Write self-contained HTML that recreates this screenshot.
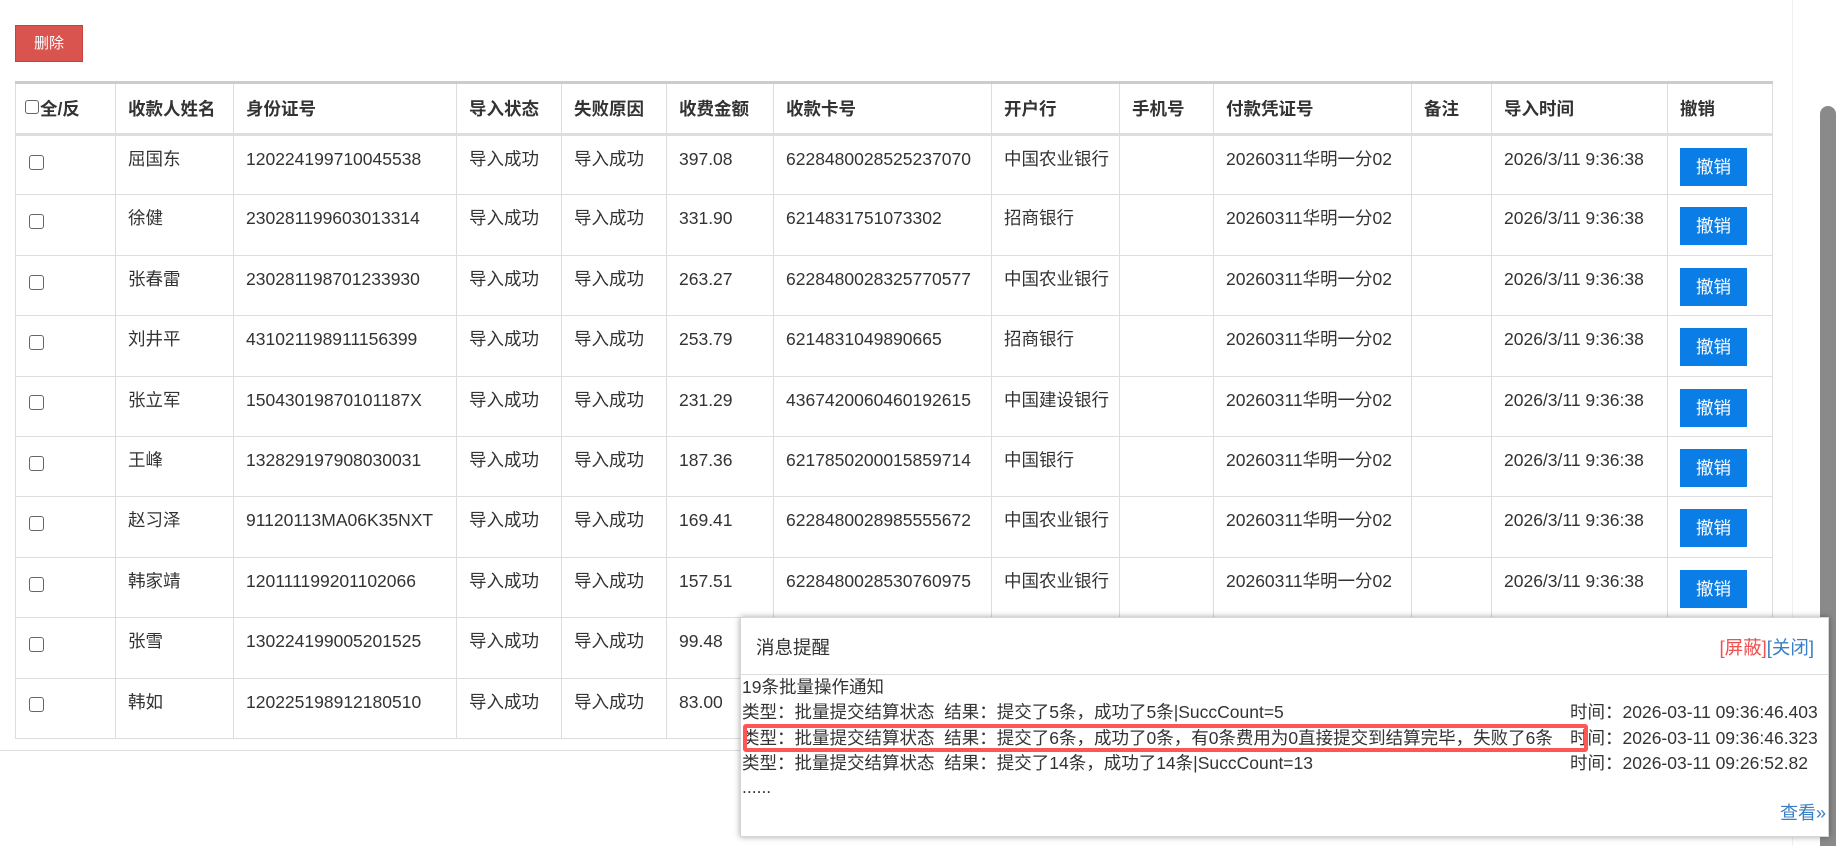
<!DOCTYPE html>
<html><head><meta charset="utf-8"><style>
*{box-sizing:border-box;margin:0;padding:0}
body{width:1836px;height:846px;overflow:hidden;background:#fff;font-family:"Liberation Sans","Noto Sans CJK SC",sans-serif;color:#333;font-size:17.5px;position:relative}
.del{position:absolute;left:15px;top:25px;width:68px;height:37px;background:#d9534f;border:1px solid #c9413d;color:#fff;font-size:15px;line-height:35px;text-align:center}
table{position:absolute;left:15px;top:81px;width:1757px;border-collapse:collapse;table-layout:fixed;border-top:3px solid #ccc}
td,th{border:1px solid #ddd;text-align:left;padding:0 12px;white-space:nowrap;overflow:hidden}
th{height:52px;font-weight:bold;border-bottom:3px solid #ddd;vertical-align:middle}
td{height:60.4px;vertical-align:top;padding-top:11px;line-height:24px}
.cb{display:inline-block;width:15px;height:15px;border:1.5px solid #666;border-radius:3px;vertical-align:middle;margin-top:4px;margin-left:1px}
th .cb{margin:0 1px 6px -1px;width:14px;height:14px}
.btn{display:inline-block;width:67px;height:38px;background:#0b7de6;color:#fff;text-align:center;line-height:38px;margin-top:1px;margin-left:0px}
.line{position:absolute;left:0;top:750px;width:1792px;border-top:1px solid #ddd}
.vline{position:absolute;left:1792px;top:0;height:846px;border-left:1px solid #eef0f3}
.thumb{position:absolute;left:1820px;top:106px;width:16px;height:740px;background:#8a8a8a;border-radius:8px 8px 0 0}
.pop{position:absolute;left:740px;top:617px;width:1089px;height:220px;background:#fff;border:1px solid #d6d6d6;box-shadow:0 0 6px rgba(0,0,0,.35);overflow:hidden}
.ph{height:57px;border-bottom:1px solid #ddd;position:relative}
.ph .t{position:absolute;left:15px;top:16px;font-size:18.5px}
.ph .r{position:absolute;right:14px;top:16px;font-size:18.5px}
.pb{position:relative;font-size:17.5px}
.pb div{position:absolute;left:1px;white-space:nowrap;height:25px;line-height:25px}
.tm{position:absolute;left:829px;white-space:nowrap;line-height:25px}
.box{position:absolute;left:2px;width:845px;height:28px;border:4px solid #f55;border-radius:3px}
.more{position:absolute;right:2px;top:181px;color:#3a7fc4;font-size:18px}
</style></head><body>
<div class="del">删除</div>
<table>
<colgroup><col style="width:100px"><col style="width:118px"><col style="width:223px"><col style="width:105px"><col style="width:105px"><col style="width:107px"><col style="width:218px"><col style="width:128px"><col style="width:94px"><col style="width:198px"><col style="width:80px"><col style="width:176px"><col style="width:105px"></colgroup>
<tr><th style="padding-left:10px"><span class="cb"></span>全/反</th><th>收款人姓名</th><th>身份证号</th><th>导入状态</th><th>失败原因</th><th>收费金额</th><th>收款卡号</th><th>开户行</th><th>手机号</th><th>付款凭证号</th><th>备注</th><th>导入时间</th><th>撤销</th></tr>
<tr><td><span class="cb"></span></td><td>屈国东</td><td>120224199710045538</td><td>导入成功</td><td>导入成功</td><td>397.08</td><td>6228480028525237070</td><td>中国农业银行</td><td></td><td>20260311华明一分02</td><td></td><td>2026/3/11 9:36:38</td><td><span class="btn">撤销</span></td></tr>
<tr><td><span class="cb"></span></td><td>徐健</td><td>230281199603013314</td><td>导入成功</td><td>导入成功</td><td>331.90</td><td>6214831751073302</td><td>招商银行</td><td></td><td>20260311华明一分02</td><td></td><td>2026/3/11 9:36:38</td><td><span class="btn">撤销</span></td></tr>
<tr><td><span class="cb"></span></td><td>张春雷</td><td>230281198701233930</td><td>导入成功</td><td>导入成功</td><td>263.27</td><td>6228480028325770577</td><td>中国农业银行</td><td></td><td>20260311华明一分02</td><td></td><td>2026/3/11 9:36:38</td><td><span class="btn">撤销</span></td></tr>
<tr><td><span class="cb"></span></td><td>刘井平</td><td>431021198911156399</td><td>导入成功</td><td>导入成功</td><td>253.79</td><td>6214831049890665</td><td>招商银行</td><td></td><td>20260311华明一分02</td><td></td><td>2026/3/11 9:36:38</td><td><span class="btn">撤销</span></td></tr>
<tr><td><span class="cb"></span></td><td>张立军</td><td>15043019870101187X</td><td>导入成功</td><td>导入成功</td><td>231.29</td><td>4367420060460192615</td><td>中国建设银行</td><td></td><td>20260311华明一分02</td><td></td><td>2026/3/11 9:36:38</td><td><span class="btn">撤销</span></td></tr>
<tr><td><span class="cb"></span></td><td>王峰</td><td>132829197908030031</td><td>导入成功</td><td>导入成功</td><td>187.36</td><td>6217850200015859714</td><td>中国银行</td><td></td><td>20260311华明一分02</td><td></td><td>2026/3/11 9:36:38</td><td><span class="btn">撤销</span></td></tr>
<tr><td><span class="cb"></span></td><td>赵习泽</td><td>91120113MA06K35NXT</td><td>导入成功</td><td>导入成功</td><td>169.41</td><td>6228480028985555672</td><td>中国农业银行</td><td></td><td>20260311华明一分02</td><td></td><td>2026/3/11 9:36:38</td><td><span class="btn">撤销</span></td></tr>
<tr><td><span class="cb"></span></td><td>韩家靖</td><td>120111199201102066</td><td>导入成功</td><td>导入成功</td><td>157.51</td><td>6228480028530760975</td><td>中国农业银行</td><td></td><td>20260311华明一分02</td><td></td><td>2026/3/11 9:36:38</td><td><span class="btn">撤销</span></td></tr>
<tr><td><span class="cb"></span></td><td>张雪</td><td>130224199005201525</td><td>导入成功</td><td>导入成功</td><td>99.48</td><td></td><td></td><td></td><td></td><td></td><td></td><td></td></tr>
<tr><td><span class="cb"></span></td><td>韩如</td><td>120225198912180510</td><td>导入成功</td><td>导入成功</td><td>83.00</td><td></td><td></td><td></td><td></td><td></td><td></td><td></td></tr>
</table>
<div class="line"></div>
<div class="vline"></div>
<div class="thumb"></div>
<div class="pop">
<div class="ph"><span class="t">消息提醒</span><span class="r"><span style="color:#f05050">[屏蔽]</span><span style="color:#3a7fc4">[关闭]</span></span></div>
<div class="pb">
<div style="top:0px">19条批量操作通知</div>
<div style="top:25px">类型：批量提交结算状态&nbsp; 结果：提交了5条，成功了5条|SuccCount=5</div>
<div style="top:51px">类型：批量提交结算状态&nbsp; 结果：提交了6条，成功了0条，有0条费用为0直接提交到结算完毕，失败了6条</div>
<div style="top:76px">类型：批量提交结算状态&nbsp; 结果：提交了14条，成功了14条|SuccCount=13</div>
<div style="top:100px">......</div>
<span class="tm" style="top:25px">时间：2026-03-11 09:36:46.403</span>
<span class="tm" style="top:51px">时间：2026-03-11 09:36:46.323</span>
<span class="tm" style="top:76px">时间：2026-03-11 09:26:52.82</span>
<span class="box" style="top:49px"></span>
</div>
<span class="more">查看»</span>
</div>
</body></html>
